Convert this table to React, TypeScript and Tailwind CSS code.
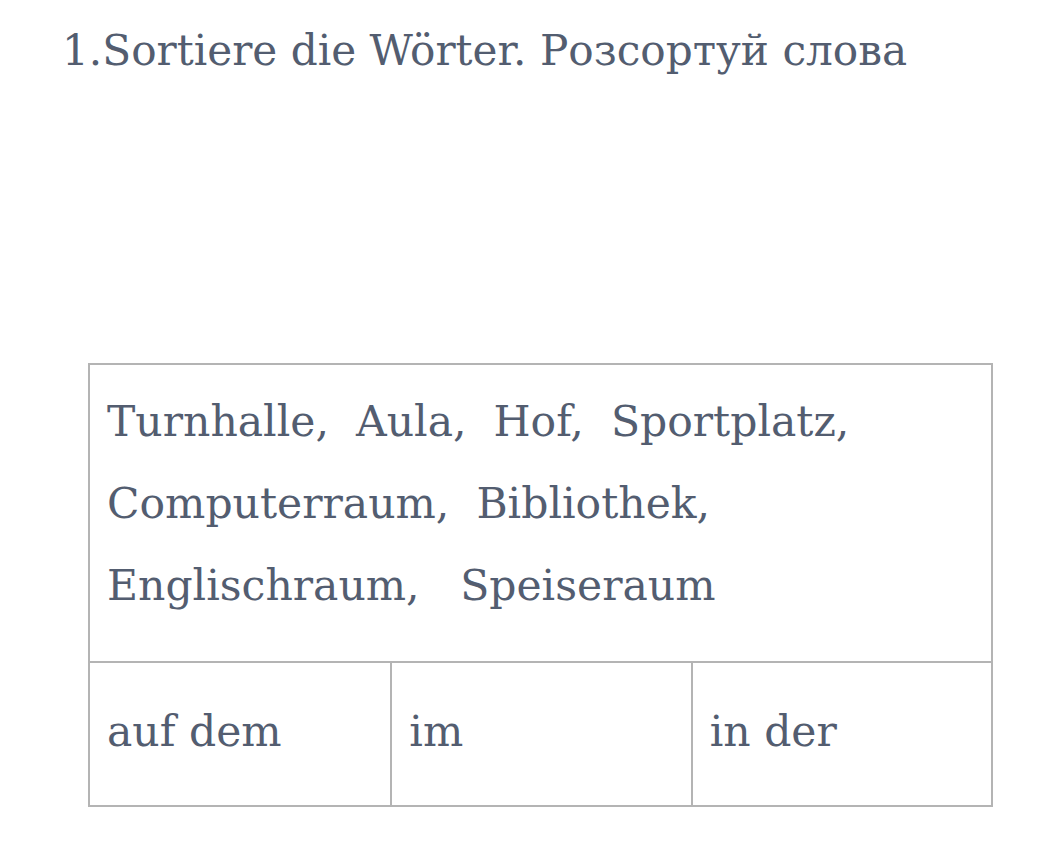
export default function App() {
  const serif = "font-['DejaVu_Serif','Liberation_Serif',serif]";
  return (
    <div className={`w-full h-[859px] bg-white text-[#535d70] ${serif}`}>
      <h1 className="pl-[62px] pt-[27px] text-[42.2px] leading-[48px] font-normal">
        1.Sortiere die Wörter. Розсортуй слова
      </h1>

      <div className="ml-[88px] mt-[288px] w-[905px] border-2 border-[#b4b4b4]">
        {/* word list */}
        <div className="h-[296px] pl-[17px] pt-[16px] text-[42.5px] leading-[82px] whitespace-pre">
          <div>Turnhalle,  Aula,  Hof,  Sportplatz,</div>
          <div>Computerraum,  Bibliothek,</div>
          <div>Englischraum,   Speiseraum</div>
        </div>

        {/* columns */}
        <div className="grid grid-cols-3 h-[144px] border-t-2 border-[#b4b4b4] text-[42.5px] leading-[82px]">
          <div className="pl-[17px] pt-[28px]">auf dem</div>
          <div className="pl-[17px] pt-[28px] border-l-2 border-[#b4b4b4]">im</div>
          <div className="pl-[17px] pt-[28px] border-l-2 border-[#b4b4b4]">in der</div>
        </div>
      </div>
    </div>
  );
}
